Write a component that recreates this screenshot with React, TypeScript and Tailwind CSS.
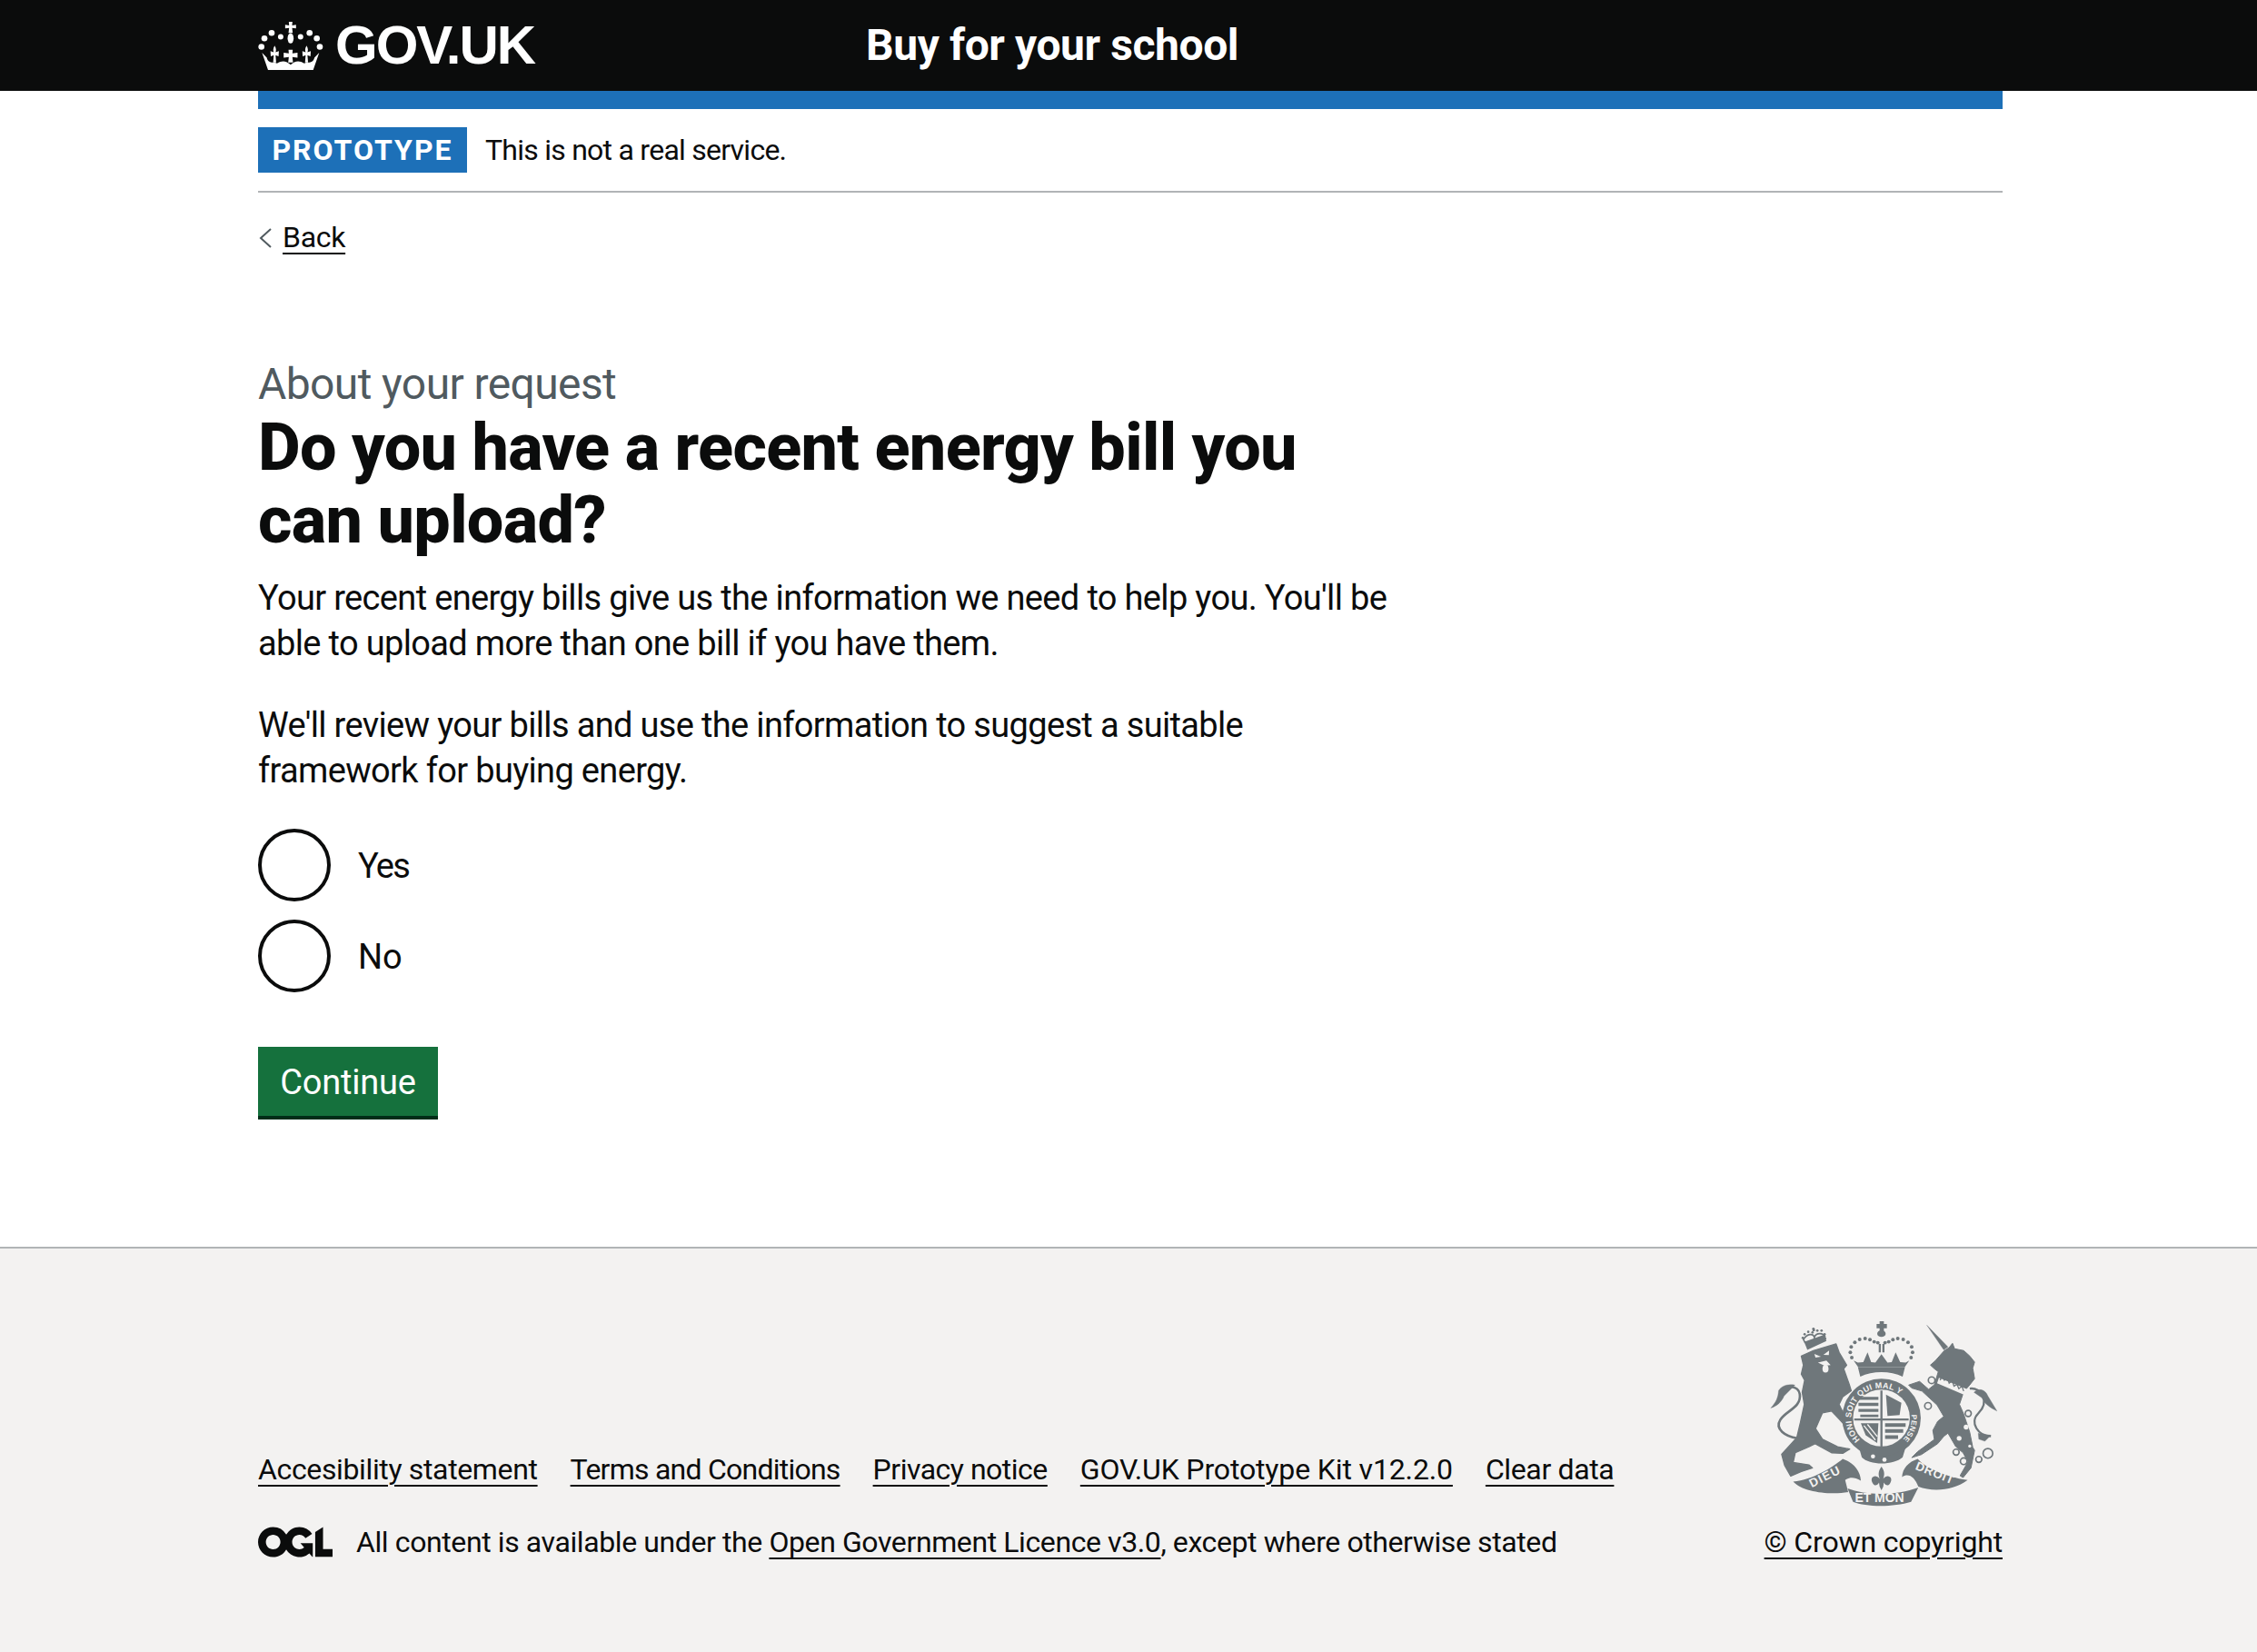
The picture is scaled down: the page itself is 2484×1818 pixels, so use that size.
import React from "react";

function Crown() {
  const dots: [number, number, number][] = [
    [92, 65, 9], [62, 52, 10], [38, 70, 10], [28, 98, 10],
    [158, 65, 9], [188, 52, 10], [212, 70, 10], [222, 98, 10],
  ];
  const fleur = (x: number) => (
    <path
      key={x}
      d={`M${x} 94 C${x + 6} 104 ${x + 5} 110 ${x + 3} 116 L${x + 14} 112 L${x + 13} 130 L${x + 3} 126 L${x + 5} 150 H${x - 5} L${x - 3} 126 L${x - 13} 130 L${x - 14} 112 L${x - 3} 116 C${x - 5} 110 ${x - 6} 104 ${x} 94 Z`}
    />
  );
  return (
    <svg viewBox="18 15 218 160" className="w-[73px] h-[53px] shrink-0" fill="#fff" aria-hidden="true">
      <path d="M119 15 H131 L130 27 L143 25 V37 L130 35 L132 52 H118 L120 35 L107 37 V25 L120 27 Z" />
      <ellipse cx="125" cy="70" rx="10" ry="17" />
      {dots.map(([x, y, r]) => (
        <circle key={x + "-" + y} cx={x} cy={y} r={r} />
      ))}
      {fleur(72)}
      {fleur(178)}
      <path d="M118 108 H132 L131 120 L148 118 V134 L131 132 L133 150 H117 L119 132 L102 134 V118 L119 120 Z" />
      <path d="M30 118 L50 175 H200 L220 118 L204 134 C202 146 192 152 178 150 L170 153 C152 142 138 146 125 158 C112 146 98 142 80 153 L72 150 C58 152 48 146 46 134 Z" />
      <path d="M84 153 C100 146 112 150 125 160 C138 150 150 146 166 153 L172 160 H78 Z" />
    </svg>
  );
}

function Ogl() {
  return (
    <svg viewBox="0 0 483.2 195.7" className="w-[82px] h-[34px] shrink-0" fill="#0b0c0c" aria-hidden="true">
      <path d="M421.5 142.8V.1l-50.7 32.3v161.1h112.4v-50.7zm-122.3-9.6A47.12 47.12 0 0 1 221 97.8c0-26 21.1-47.1 47.1-47.1 16.7 0 31.4 8.7 39.7 21.8l42.7-27.2A97.63 97.63 0 0 0 268.1 0c-36.5 0-68.3 20.1-85.1 49.7A98 98 0 0 0 97.8 0C43.9 0 0 43.9 0 97.8s43.9 97.8 97.8 97.8c36.5 0 68.3-20.1 85.1-49.7a97.76 97.76 0 0 0 149.6 25.4l19.4 22.2h3v-87.8h-80l24.3 27.5zM97.8 145c-26 0-47.1-21.1-47.1-47.1s21.1-47.1 47.1-47.1 47.2 21 47.2 47S123.8 145 97.8 145" />
    </svg>
  );
}

function Crest() {
  const c = "#6f777b";
  const bg = "#f3f2f1";
  const rcDots = [
    [347, 178], [350, 160], [362, 145], [378, 135], [396, 132], [412, 136], [426, 143], [438, 146],
    [553, 178], [550, 160], [538, 145], [522, 135], [504, 132], [488, 136], [474, 143], [462, 146],
    [352, 195], [548, 195],
  ];
  const lcDots = [
    [190, 130], [196, 118], [208, 110], [222, 112], [238, 106], [252, 106], [262, 118], [264, 132], [225, 100],
  ];
  return (
    <svg viewBox="70 60 780 640" className="w-[260px] h-[213px]" fill={c} aria-hidden="true">
      {/* lion */}
      <g transform="translate(60 60)" stroke={c} strokeWidth="4" strokeLinejoin="round">
        <path d="M125 130 L165 112 L240 90 L250 118 L275 160 L265 172 L283 222 L290 245 L262 265 L250 290 L268 328 L300 352 L302 372 L272 362 L250 338 L225 312 L195 318 L172 370 L195 405 L245 430 L285 438 L262 452 L225 450 L170 420 L150 430 L105 450 L98 482 L150 490 L162 500 L125 512 L90 527 L70 492 L60 455 L110 400 L122 350 L135 290 L128 250 L136 210 L125 190 L132 160 Z" />
        <path d="M112 402 C72 396 36 372 56 340 C76 310 126 300 120 256 C114 226 74 226 60 246" fill="none" strokeWidth="8" />
        <path d="M24 302 C42 282 48 268 50 244 C62 226 84 222 104 226 L68 262 C60 282 44 296 24 302 Z" strokeWidth="1" />
      </g>
      <ellipse cx="265" cy="232" rx="10" ry="13" fill={bg} />
      <path d="M228 183 L250 192 L232 195 Z M277 172 L258 186 L276 187 Z M240 212 L268 205 L282 220 L262 222 Z" fill={bg} />
      {/* lion crown */}
      <path d="M195 145 L262 122 L268 140 L205 170 Z" />
      <path d="M192 135 C205 115 225 115 228 128 C235 112 258 112 264 128 L262 122 L197 145 Z" fill="none" stroke={c} strokeWidth="5" />
      <path d="M222 100 H230 V108 H222 Z" />
      {lcDots.map(([x, y]) => (
        <circle key={x + "_" + y} cx={x} cy={y} r="4" />
      ))}

      {/* unicorn */}
      <g transform="translate(420 60)" stroke={c} strokeWidth="3" strokeLinejoin="round">
        <path d="M180 28 L250 100 L236 110 Z" strokeWidth="1" />
        <path d="M238 112 L254 102 L265 88 L272 106 L302 112 L322 130 L338 150 L332 170 L338 205 L320 228 L302 248 L288 290 L302 322 L322 382 L332 432 L338 442 L326 500 L300 532 L290 526 L316 480 L300 450 L276 430 L250 385 L236 396 L216 420 L162 456 L130 466 L150 446 L205 406 L200 376 L216 346 L236 330 L214 292 L190 270 L164 246 L130 236 L120 226 L156 214 L186 240 L205 225 L218 182 L205 172 L192 160 L208 146 Z" />
        <path d="M322 238 C360 232 390 280 350 320 C320 350 350 395 392 395" fill="none" strokeWidth="7" />
        <path d="M336 250 C350 236 372 238 382 262 L412 312 C392 302 372 290 362 268 Z" strokeWidth="1" />
        <path d="M350 385 L392 392 L372 412 L352 405 Z" strokeWidth="1" />
      </g>
      <path d="M640 262 L735 300 L722 318 L634 280 Z" fill={bg} />
      <g fill="none" stroke={c} strokeWidth="5">
        <circle cx="616" cy="270" r="11" />
        <circle cx="604" cy="355" r="11" />
        <circle cx="737" cy="380" r="10" fill={bg} />
        <circle cx="697" cy="508" r="10" />
        <circle cx="722" cy="538" r="11" />
        <circle cx="772" cy="532" r="10" />
        <circle cx="802" cy="512" r="16" />
      </g>
      <circle cx="707" cy="462" r="8" fill={bg} />
      <circle cx="730" cy="425" r="8" fill={bg} />
      <circle cx="742" cy="488" r="5" fill={bg} />
      <path d="M644 270 L652 254 L658 270 L668 262 L674 280 L684 272 L690 290 L700 284 L706 298 L716 290 L722 306" fill="none" stroke={c} strokeWidth="4" />

      {/* royal crown */}
      <path d="M444 75 H458 V84 H468 V98 H458 V108 H444 V98 H434 V84 H444 Z" />
      <ellipse cx="450" cy="116" rx="14" ry="11" />
      <rect x="441" y="150" width="7" height="28" />
      <rect x="453" y="150" width="7" height="28" />
      {rcDots.map(([x, y]) => (
        <circle key={x + "." + y} cx={x} cy={y} r="6" />
      ))}
      <path d="M358 205 L372 225 H528 L542 205 L530 212 L512 210 L497 178 L484 210 L470 212 L450 184 L430 212 L416 210 L404 178 L390 210 L372 212 Z" />
      <path d="M372 226 H528 L520 258 C480 238 420 238 380 258 Z" />
      <path d="M386 258 C420 242 480 242 514 258 L510 270 C475 256 425 256 390 270 Z" fill={bg} />

      {/* garter */}
      <circle cx="450" cy="395" r="130" />
      <circle cx="450" cy="395" r="94" fill={bg} />
      <path d="M360 400 H540 M450 304 V490" fill="none" stroke={c} strokeWidth="7" />
      <g fill={c}>
        <path d="M378 325 H440 V335 H378 Z M374 345 H440 V355 H374 Z M374 365 H440 V375 H374 Z M380 384 H440 V392 H380 Z" />
        <path d="M465 318 L516 345 L510 385 L470 388 Z" />
        <path d="M462 412 H530 V424 H462 Z M462 432 H522 V444 H462 Z M462 452 H505 V464 H462 Z" />
        <path d="M382 412 H440 L436 478 L398 452 Z" />
      </g>
      <path d="M392 420 L430 468 M404 416 L436 456" stroke={bg} strokeWidth="4" />
      <defs>
        <path id="g1" d="M383 470 A100 100 0 1 1 545 364" />
        <path id="g3" d="M548 376 A100 100 0 0 1 505 479" />
      </defs>
      <text fill={bg} fontFamily="'Liberation Sans',sans-serif" fontWeight="700" fontSize="27" letterSpacing="1">
        <textPath href="#g1" startOffset="5">HONI SOIT QUI MAL Y</textPath>
      </text>
      <text fill={bg} fontFamily="'Liberation Sans',sans-serif" fontWeight="700" fontSize="25" letterSpacing="1">
        <textPath href="#g3" startOffset="8">PENSE</textPath>
      </text>
      <path d="M375 490 C410 530 490 530 530 492 L520 525 C490 552 410 552 385 525 Z" />
      <circle cx="422" cy="522" r="7" fill={bg} />
      <circle cx="460" cy="533" r="7" fill={bg} />

      {/* fleur */}
      <path d="M450 556 C462 572 460 584 456 596 C470 578 492 592 478 612 C472 622 462 616 458 608 L456 622 L450 634 L444 622 L442 608 C438 616 428 622 422 612 C408 592 430 578 444 596 C440 584 438 572 450 556 Z" />

      {/* ribbons */}
      <path d="M158 605 C225 598 285 560 322 530 C352 540 380 565 382 602 C360 590 345 590 330 600 L340 640 C280 650 190 640 158 605 Z" />
      <path d="M338 628 C400 652 500 652 572 625 L548 672 C490 690 400 690 356 672 Z" />
      <path d="M735 600 C660 590 590 555 570 530 C540 540 520 560 518 590 C540 575 560 590 572 622 C620 640 690 635 735 600 Z" />
      <g fill={bg} fontFamily="'Liberation Sans',sans-serif" fontWeight="700" fontSize="40">
        <text x="220" y="626" transform="rotate(-27 220 626)" letterSpacing="4">DIEU</text>
        <text x="362" y="674" fontSize="42">ET MON</text>
        <text x="560" y="564" transform="rotate(22 560 564)" letterSpacing="2">DROIT</text>
      </g>
    </svg>
  );
}

const linkCls = "underline decoration-2 underline-offset-[6px]";

export default function App() {
  return (
    <div className="font-['Roboto','Noto_Sans',sans-serif] text-[#0b0c0c] bg-white min-h-[1818px] flex flex-col">
      <header className="bg-[#0b0c0c] h-[100px]">
        <div className="w-[1920px] ml-[284px] h-full flex items-center">
          <div className="w-[669px] flex items-center gap-3 text-white">
            <Crown />
            <span className="font-['Liberation_Sans',sans-serif] font-bold text-[60px] leading-none tracking-[-2px]">GOV.UK</span>
          </div>
          <span className="text-white font-bold text-[48px] leading-[60px] tracking-[-0.42px]">Buy for your school</span>
        </div>
      </header>

      <div className="w-[1920px] ml-[284px]">
        <div className="h-5 bg-[#1d70b8]" />
        <div className="mt-5 pb-5 border-b-2 border-[#b1b4b6] flex items-center h-[72px]">
          <strong className="bg-[#1d70b8] text-white h-[50px] w-[230px] flex items-center justify-center text-[32px] font-bold tracking-[2px]">PROTOTYPE</strong>
          <span className="ml-5 text-[32px] leading-[40px] tracking-[-0.75px]">This is not a real service.</span>
        </div>
        <div className="mt-[30px] h-10 flex items-center text-[32px] leading-10">
          <svg viewBox="0 0 16 24" className="w-4 h-6 mr-[11px]" fill="none" stroke="#505a5f" strokeWidth="2"><path d="M14 2 L3 12 L14 22" /></svg>
          <a className={linkCls + " tracking-[-0.3px] -translate-y-[1px]"}>Back</a>
        </div>
      </div>

      <main className="w-[1920px] ml-[284px] pt-[111px]">
        <div className="w-[1280px]">
          <div className="text-[48px] leading-[60px] text-[#505a5f] tracking-[-0.6px]">About your request</div>
          <h1 className="w-[1250px] font-extrabold text-[72px] leading-[80px] tracking-[-0.7px]">Do you have a recent energy bill you can upload?</h1>
          <p className="mt-5 text-[38px] leading-[50px] tracking-[-0.66px]">Your recent energy bills give us the information we need to help you. You'll be able to upload more than one bill if you have them.</p>
          <p className="mt-10 w-[1160px] text-[38px] leading-[50px] tracking-[-0.66px]">We'll review your bills and use the information to suggest a suitable framework for buying energy.</p>
          <div className="mt-[39px] flex flex-col gap-5">
            <div className="flex items-center h-20">
              <span className="w-20 h-20 rounded-full border-4 border-[#0b0c0c] bg-white shrink-0" />
              <span className="ml-[30px] pt-[2px] text-[38px] leading-[50px] tracking-[-1.8px]">Yes</span>
            </div>
            <div className="flex items-center h-20">
              <span className="w-20 h-20 rounded-full border-4 border-[#0b0c0c] bg-white shrink-0" />
              <span className="ml-[30px] pt-[2px] text-[38px] leading-[50px]">No</span>
            </div>
          </div>
          <button className="mt-[60px] w-[198px] h-20 bg-[#15713d] text-white text-[38px] leading-none pt-[2px] border-b-4 border-[#002d18] tracking-[-0.2px]">Continue</button>
        </div>
      </main>

      <footer className="mt-[140px] flex-1 bg-[#f3f2f1] border-t-2 border-[#b1b4b6]">
        <div className="w-[1920px] ml-[284px] pt-[75px] flex items-end justify-between">
          <div>
            <ul className="flex gap-[36px] text-[32px] leading-10 tracking-[-0.36px]">
              <li><a className={linkCls}>Accesibility statement</a></li>
              <li><a className={linkCls + " tracking-[-0.76px]"}>Terms and Conditions</a></li>
              <li><a className={linkCls + " tracking-[-0.5px]"}>Privacy notice</a></li>
              <li><a className={linkCls + " tracking-[-0.14px]"}>GOV.UK Prototype Kit v12.2.0</a></li>
              <li><a className={linkCls}>Clear data</a></li>
            </ul>
            <div className="mt-10 flex items-center h-10 text-[32px] leading-10 tracking-[-0.4px]">
              <Ogl />
              <span className="ml-[26px]">All content is available under the <a className={linkCls}>Open Government Licence v3.0</a>, except where otherwise stated</span>
            </div>
          </div>
          <div className="flex flex-col items-end">
            <Crest />
            <a className={linkCls + " mt-[15px] text-[32px] leading-10 tracking-[-0.15px]"}>© Crown copyright</a>
          </div>
        </div>
      </footer>
    </div>
  );
}
